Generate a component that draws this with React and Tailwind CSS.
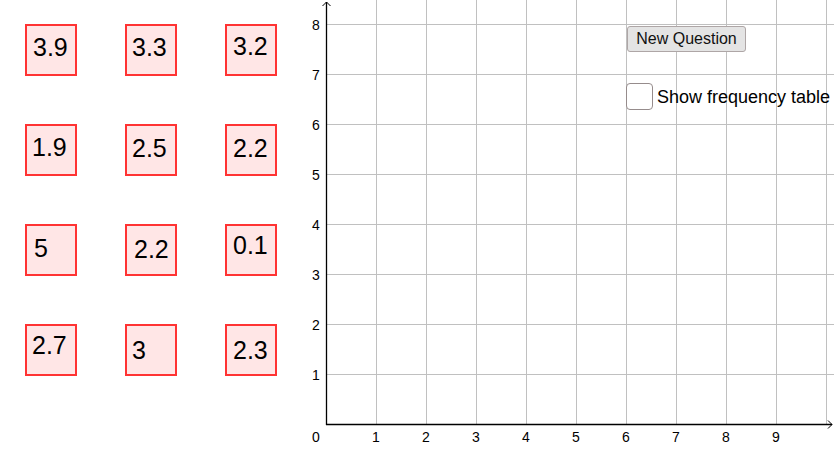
import React from 'react';

// value, padding-left, padding-top inside each box
const cards = [
  ['3.9', 6, 9], ['3.3', 5, 9], ['3.2', 6, 8],
  ['1.9', 5, 9], ['2.5', 5, 10], ['2.2', 6, 10],
  ['5', 7, 10], ['2.2', 7, 11], ['0.1', 6, 7],
  ['2.7', 5, 7], ['3', 5, 12], ['2.3', 6, 12],
];

function Graph() {
  const xs = [1, 2, 3, 4, 5, 6, 7, 8, 9, 10];
  const ys = [1, 2, 3, 4, 5, 6, 7, 8];
  return (
    <svg width="534" height="451" className="block">
      {xs.map((k) => (
        <line key={'v' + k} x1={26.5 + 50 * k} y1="0" x2={26.5 + 50 * k} y2="424" stroke="#c0c0c0" strokeWidth="1" />
      ))}
      {ys.map((k) => (
        <line key={'h' + k} x1="26" y1={424.5 - 50 * k} x2="534" y2={424.5 - 50 * k} stroke="#c0c0c0" strokeWidth="1" />
      ))}
      <line x1="26.5" y1="2" x2="26.5" y2="425" stroke="#000" strokeWidth="1.3" />
      <line x1="26" y1="424.5" x2="532" y2="424.5" stroke="#000" strokeWidth="1.3" />
      <polyline points="22.5,6 26.5,2 30.5,6" fill="none" stroke="#000" strokeWidth="1" />
      <polyline points="528,420.5 532,424.5 528,428.5" fill="none" stroke="#000" strokeWidth="1" />
      <g fontFamily="'Liberation Sans', Arial, sans-serif" fontSize="14" fill="#000" textAnchor="middle">
        {ys.map((k) => (
          <text key={'yl' + k} x="16" y={429.5 - 50 * k}>{k}</text>
        ))}
        <text x="16" y="441.5">0</text>
        {xs.slice(0, 9).map((k) => (
          <text key={'xl' + k} x={26 + 50 * k} y="441.5">{k}</text>
        ))}
      </g>
    </svg>
  );
}

export default function App() {
  return (
    <div className="w-[834px] h-[451px] flex bg-white overflow-hidden text-black" style={{ fontFamily: "'Liberation Sans', Arial, sans-serif" }}>
      {/* Value cards */}
      <div className="w-[300px] shrink-0 pl-[25px] pt-[24px]">
        <div className="grid grid-cols-[52px_52px_52px] gap-x-[48px] gap-y-[48px]">
          {cards.map(([v, pl, pt], i) => (
            <div
              key={i}
              className="w-[52px] h-[52px] border-2 border-[#ff3333] bg-[#ffe6e6] text-[25px] leading-none"
              style={{ paddingLeft: pl, paddingTop: pt }}
            >
              {v}
            </div>
          ))}
        </div>
      </div>

      {/* Graph */}
      <div className="relative w-[534px] shrink-0">
        <Graph />
        <button className="absolute left-[327px] top-[26px] w-[119px] h-[26px] bg-[#e4e4e4] border border-[#aea6a6] rounded-[3px] text-[16px] leading-none text-[#111]">
          New Question
        </button>
        <label className="absolute left-[326px] top-[83px] flex items-center gap-[4px] whitespace-nowrap">
          <span className="w-[27px] h-[27px] border-[1.5px] border-[#968c8c] rounded-[4px] bg-white" />
          <span className="text-[18px] leading-none">Show frequency table</span>
        </label>
      </div>
    </div>
  );
}
